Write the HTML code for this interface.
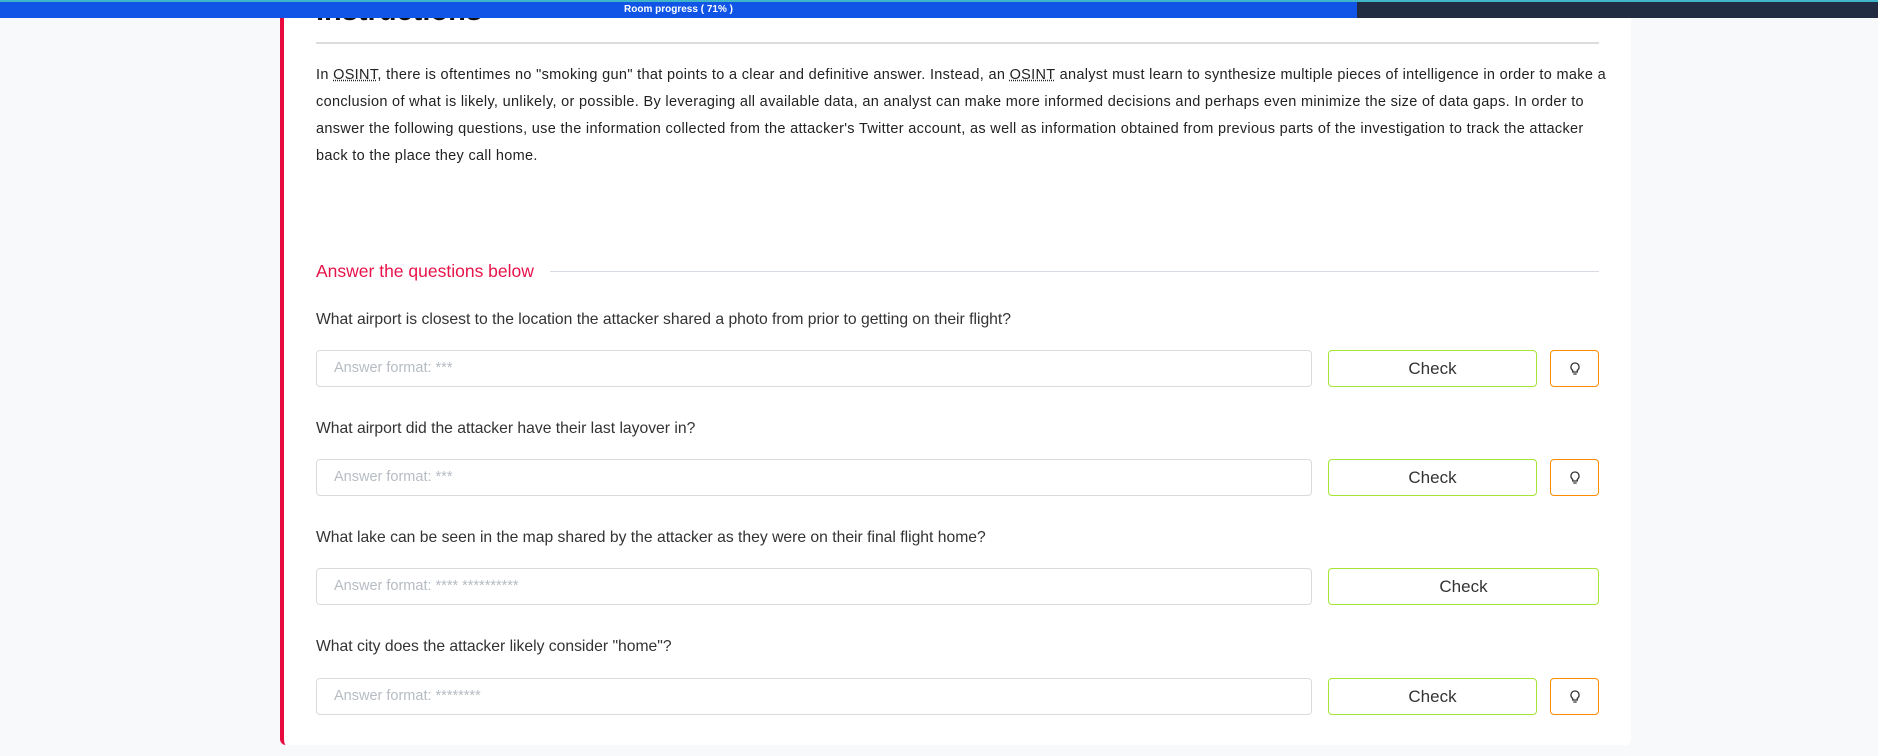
<!DOCTYPE html>
<html><head><meta charset="utf-8"><style>
*{margin:0;padding:0;box-sizing:border-box}
body{width:1878px;height:756px;overflow:hidden;background:#f8f9fb;font-family:"Liberation Sans",Arial,sans-serif;position:relative}
.top{position:absolute;left:0;top:0;width:1878px;height:18px;background:#212c42;border-top:2px solid #3fb5c9;z-index:5}
.prog{position:absolute;left:0;top:0;width:1357px;height:16px;background:#1155e6;color:#fff;font-size:10px;font-weight:bold;text-align:center;line-height:15px;padding-left:0}
.card{position:absolute;left:280px;top:0;width:1351px;height:745px;background:#fff;border-left:4px solid #e8093f;border-radius:0 0 6px 6px}
h2{position:absolute;left:32px;top:-4px;font-size:29px;font-weight:bold;color:#111;line-height:30px}
.hr{position:absolute;left:32px;top:42px;width:1283px;height:2px;background:#dcdcdc}
p{position:absolute;left:32px;top:62px;width:1292px;font-size:14.5px;letter-spacing:0.32px;line-height:27px;color:#222}
abbr{text-decoration:underline dotted}
.ans{position:absolute;left:32px;top:261px;width:1283px;color:#e8134a;font-size:17.5px;display:flex;align-items:center}
.ans:after{content:"";flex:1;height:1px;background:#d8dde3;margin-left:16px}
.q{position:absolute;left:32px;font-size:15.7px;color:#333}
.in{position:absolute;left:32px;width:996px;height:37px;border:1px solid #d9dcdf;border-radius:4px;color:#b6bcc3;font-size:14.5px;line-height:35px;padding-left:17px}
.ck{position:absolute;left:1044px;width:209px;height:37px;border:1px solid #a3e635;border-radius:4px;text-align:center;line-height:35px;font-size:17px;color:#333}
.ck.w{width:271px}
.h{position:absolute;left:1266px;width:49px;height:37px;border:1px solid #fb8c00;border-radius:4px;display:flex;align-items:center;justify-content:center}
</style></head><body>
<div class="top"><div class="prog">Room progress ( 71% )</div></div>
<div class="card">
<h2>Instructions</h2>
<div class="hr"></div>
<p>In <abbr>OSINT</abbr>, there is oftentimes no "smoking gun" that points to a clear and definitive answer. Instead, an <abbr>OSINT</abbr> analyst must learn to synthesize multiple pieces of intelligence in order to make a conclusion of what is likely, unlikely, or possible. By leveraging all available data, an analyst can make more informed decisions and perhaps even minimize the size of data gaps. In order to answer the following questions, use the information collected from the attacker's Twitter account, as well as information obtained from previous parts of the investigation to track the attacker back to the place they call home.</p>
<div class="ans">Answer the questions below</div>

<div class="q" style="top:311px">What airport is closest to the location the attacker shared a photo from prior to getting on their flight?</div>
<div class="in" style="top:350px">Answer format: ***</div>
<div class="ck" style="top:350px">Check</div>
<div class="h" style="top:350px"><svg width="12" height="14" viewBox="0 0 12 14" fill="none" stroke="#333" stroke-width="1.3"><path d="M6 1a4 4 0 0 0-2.3 7.3V10h4.6V8.3A4 4 0 0 0 6 1zM4.3 12h3.4"/></svg></div>

<div class="q" style="top:420px">What airport did the attacker have their last layover in?</div>
<div class="in" style="top:459px">Answer format: ***</div>
<div class="ck" style="top:459px">Check</div>
<div class="h" style="top:459px"><svg width="12" height="14" viewBox="0 0 12 14" fill="none" stroke="#333" stroke-width="1.3"><path d="M6 1a4 4 0 0 0-2.3 7.3V10h4.6V8.3A4 4 0 0 0 6 1zM4.3 12h3.4"/></svg></div>

<div class="q" style="top:529px">What lake can be seen in the map shared by the attacker as they were on their final flight home?</div>
<div class="in" style="top:568px">Answer format: **** **********</div>
<div class="ck w" style="top:568px">Check</div>

<div class="q" style="top:638px">What city does the attacker likely consider "home"?</div>
<div class="in" style="top:678px">Answer format: ********</div>
<div class="ck" style="top:678px">Check</div>
<div class="h" style="top:678px"><svg width="12" height="14" viewBox="0 0 12 14" fill="none" stroke="#333" stroke-width="1.3"><path d="M6 1a4 4 0 0 0-2.3 7.3V10h4.6V8.3A4 4 0 0 0 6 1zM4.3 12h3.4"/></svg></div>
</div>
</body></html>
